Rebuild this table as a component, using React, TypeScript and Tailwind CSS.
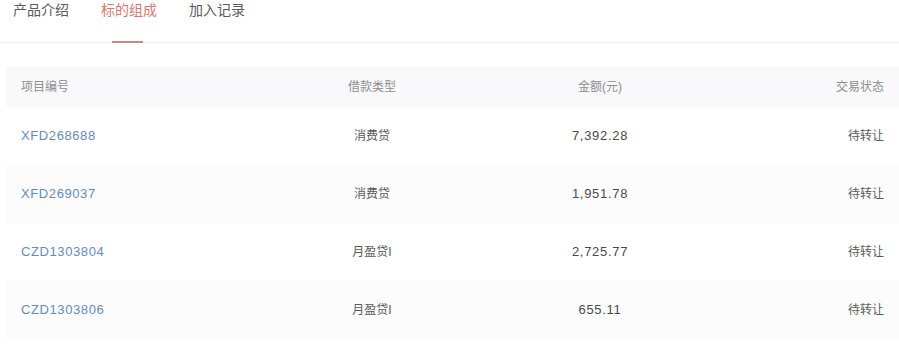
const tabs = ["产品介绍", "标的组成", "加入记录"];

const rows = [
  { id: "XFD268688", type: "消费贷", amount: "7,392.28", status: "待转让" },
  { id: "XFD269037", type: "消费贷", amount: "1,951.78", status: "待转让" },
  { id: "CZD1303804", type: "月盈贷I", amount: "2,725.77", status: "待转让" },
  { id: "CZD1303806", type: "月盈贷I", amount: "655.11", status: "待转让" },
];

const font = "font-['Liberation_Sans','Noto_Sans_CJK_SC',sans-serif]";

export default function App() {
  return (
    <main className={`h-[346px] w-[899px] overflow-hidden bg-white ${font}`}>
      <nav className="flex h-[43px] gap-[32px] border-b border-[#efefef] pl-[13px]">
        {tabs.map((t, i) => (
          <div
            key={t}
            className={`relative text-[14px] leading-[20px] ${
              i === 1 ? "text-[#e0766a]" : "text-[#5a5a5a]"
            }`}
          >
            {t}
            {i === 1 && (
              <span className="absolute bottom-[-1px] left-[11px] h-[2px] w-[31px] bg-[#c98a83]" />
            )}
          </div>
        ))}
      </nav>

      <div className="ml-[6px] mt-[24px]">
        <div className="grid h-[40px] grid-cols-[279px_144px_312px_1fr] items-center bg-[#f9f9fb] px-[15px] text-[12px] text-[#8e8e8e]">
          <span>项目编号</span>
          <span className="text-center">借款类型</span>
          <span className="text-center">金额(元)</span>
          <span className="text-right">交易状态</span>
        </div>
        {rows.map((r, i) => (
          <div
            key={r.id}
            className={`grid h-[58px] grid-cols-[279px_144px_312px_1fr] items-center px-[15px] text-[12px] text-[#5a5a5a] ${
              i % 2 === 1 ? "bg-[#fcfcfd]" : "bg-white"
            }`}
          >
            <a className="text-[13px] tracking-[0.6px] text-[#5f8cc4]" href="#">
              {r.id}
            </a>
            <span className="text-center">{r.type}</span>
            <span className="text-center text-[13px] tracking-[0.7px] text-[#4a4a4a]">
              {r.amount}
            </span>
            <span className="text-right">{r.status}</span>
          </div>
        ))}
      </div>
    </main>
  );
}
